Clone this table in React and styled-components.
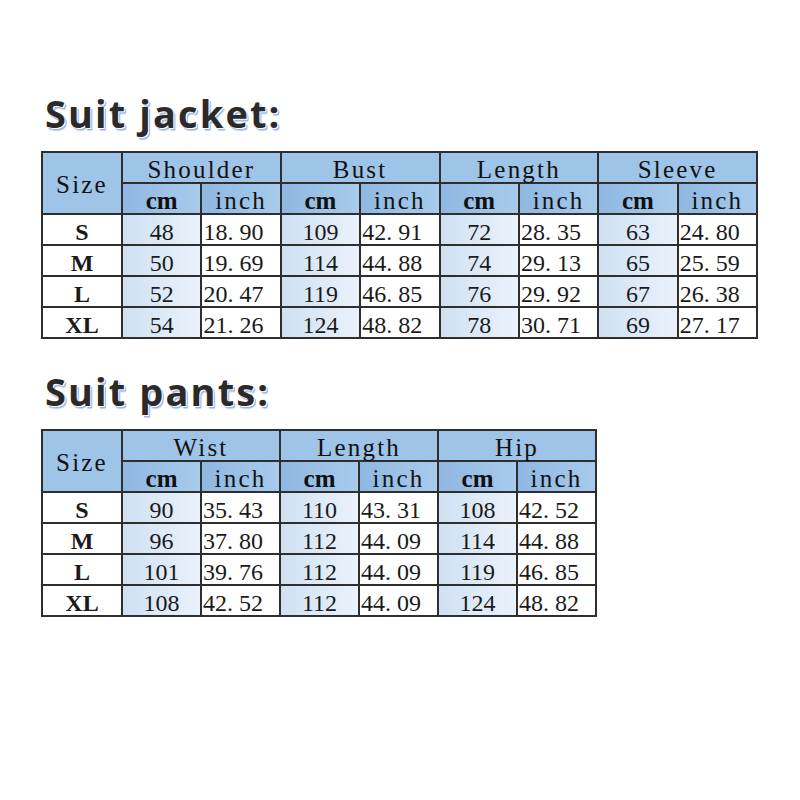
import React from "react";
import styled, { createGlobalStyle } from "styled-components";

const Global = createGlobalStyle`
  html, body { margin: 0; padding: 0; background: #ffffff; }
  #root { width: 800px; height: 800px; }
`;

const Page = styled.div`
  width: 800px;
  height: 800px;
  box-sizing: border-box;
  padding: 84px 0 0 41px;
  display: flex;
  flex-direction: column;
  background: #fff;
`;

const Section = styled.section`
  display: flex;
  flex-direction: column;
  margin-bottom: ${(p) => p.$gap || 0}px;
`;

const Title = styled.h2`
  margin: 0 0 0 4px;
  height: 67px;
  font-family: "Open Sans", Lato, sans-serif;
  font-weight: 700;
  font-size: 38px;
  letter-spacing: 2.1px;
  line-height: 58px;
  color: #2a2a2a;
  text-shadow: 1px 1px 0 #ffffff, 2px 2px 0 #9fb2dc, 2px 3px 1px #c3cfee;
`;

const Table = styled.table`
  border-collapse: collapse;
  table-layout: fixed;
  width: ${(p) => p.$w}px;
  font-family: "Liberation Serif", "Times New Roman", serif;
  color: #1a1a1a;
  border: 2px solid #2e2e2e;
`;

const Row = styled.tr`
  height: 31px;
`;

const Head = styled.th`
  border: 2px solid #2e2e2e;
  padding: 4px 0 0 0;
  font-size: 25px;
  font-weight: ${(p) => (p.$bold ? 700 : 400)};
  letter-spacing: ${(p) => (p.$bold ? 0 : 2.2)}px;
  line-height: 24px;
  text-align: center;
  color: #111;
  background: ${(p) =>
    p.$sub
      ? "linear-gradient(to right, #8fb7e1, #a8cbec)"
      : "#9ec4e8"};
`;

const Cell = styled.td`
  border: 2px solid #2e2e2e;
  padding: 5px 0 0 ${(p) => (p.$left ? 1 : 0)}px;
  font-size: 24px;
  line-height: 24px;
  font-weight: ${(p) => (p.$bold ? 700 : 400)};
  text-align: ${(p) => (p.$left ? "left" : "center")};
  white-space: nowrap;
  overflow: hidden;
  background: ${(p) =>
    p.$tint ? "linear-gradient(to right, #cfe1f3, #eaf2fb)" : "#ffffff"};
`;

const fmt = (v) => v.replace(".", ". ");

const jacketGroups = ["Shoulder", "Bust", "Length", "Sleeve"];
const jacketRows = [
  ["S", "48", "18.90", "109", "42.91", "72", "28.35", "63", "24.80"],
  ["M", "50", "19.69", "114", "44.88", "74", "29.13", "65", "25.59"],
  ["L", "52", "20.47", "119", "46.85", "76", "29.92", "67", "26.38"],
  ["XL", "54", "21.26", "124", "48.82", "78", "30.71", "69", "27.17"],
];

const pantsGroups = ["Wist", "Length", "Hip"];
const pantsRows = [
  ["S", "90", "35.43", "110", "43.31", "108", "42.52"],
  ["M", "96", "37.80", "112", "44.09", "114", "44.88"],
  ["L", "101", "39.76", "112", "44.09", "119", "46.85"],
  ["XL", "108", "42.52", "112", "44.09", "124", "48.82"],
];

function SizeTable({ groups, rows, width }) {
  return (
    <Table $w={width}>
      <colgroup>
        <col style={{ width: 80 }} />
        {groups.flatMap((g) => [
          <col key={g + "c"} />,
          <col key={g + "i"} />,
        ])}
      </colgroup>
      <thead>
        <Row>
          <Head rowSpan={2}>Size</Head>
          {groups.map((g) => (
            <Head key={g} colSpan={2}>
              {g}
            </Head>
          ))}
        </Row>
        <Row>
          {groups.flatMap((g) => [
            <Head key={g + "c"} $sub $bold>
              cm
            </Head>,
            <Head key={g + "i"} $sub>
              inch
            </Head>,
          ])}
        </Row>
      </thead>
      <tbody>
        {rows.map((r) => (
          <Row key={r[0]}>
            <Cell $bold>{r[0]}</Cell>
            {r.slice(1).map((v, i) =>
              i % 2 === 0 ? (
                <Cell key={i} $tint>
                  {v}
                </Cell>
              ) : (
                <Cell key={i} $left>
                  {fmt(v)}
                </Cell>
              )
            )}
          </Row>
        ))}
      </tbody>
    </Table>
  );
}

export default function App() {
  return (
    <Page>
      <Global />
      <Section $gap={23}>
        <Title>Suit jacket:</Title>
        <SizeTable groups={jacketGroups} rows={jacketRows} width={717} />
      </Section>
      <Section>
        <Title>Suit pants:</Title>
        <SizeTable groups={pantsGroups} rows={pantsRows} width={556} />
      </Section>
    </Page>
  );
}
